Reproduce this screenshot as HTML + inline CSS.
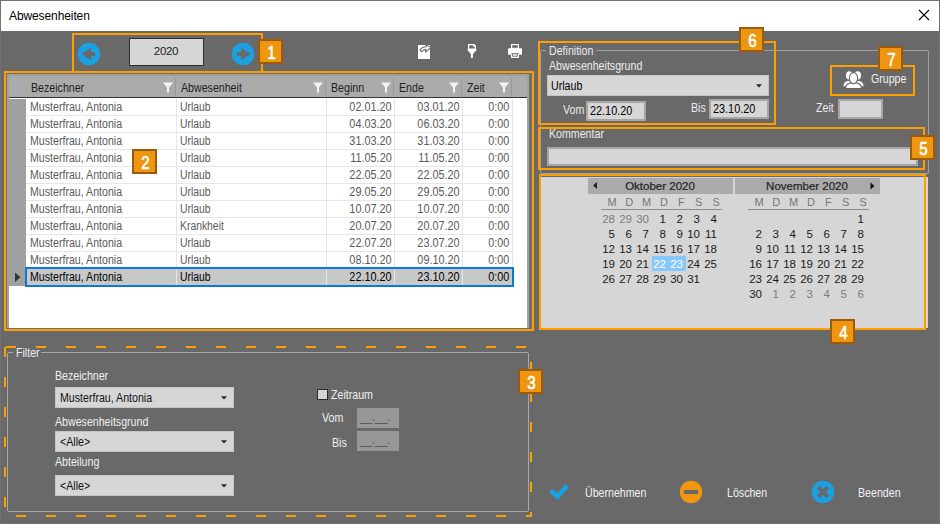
<!DOCTYPE html>
<html><head><meta charset="utf-8"><style>
html,body{margin:0;padding:0;width:940px;height:524px;overflow:hidden;background:#696969;}
body{position:relative;font-family:"Liberation Sans", sans-serif;}
div{box-sizing:content-box;}
</style></head><body>
<div style="position:absolute;left:0;top:0;width:938px;height:522px;border:1px solid #717171;background:#696969"></div>
<div style="position:absolute;left:1px;top:1px;width:938px;height:30px;background:#fff"></div>
<div style="position:absolute;left:9px;top:9.03px;font-size:12px;line-height:14px;color:#000;letter-spacing:-0.1px;white-space:nowrap;">Abwesenheiten</div>
<svg style="position:absolute;left:918px;top:9px" width="12" height="12" viewBox="0 0 12 12"><path d="M1 1L11 11M11 1L1 11" stroke="#000" stroke-width="1.1"/></svg>
<div style="position:absolute;left:72px;top:33px;width:191px;height:2px;background:#ff9e00"></div>
<div style="position:absolute;left:72px;top:71px;width:191px;height:2px;background:#ff9e00"></div>
<div style="position:absolute;left:72px;top:33px;width:2px;height:40px;background:#ff9e00"></div>
<div style="position:absolute;left:261px;top:33px;width:2px;height:40px;background:#ff9e00"></div>
<svg style="position:absolute;left:77px;top:42px" width="24" height="24" viewBox="0 0 24 24"><circle cx="12" cy="12" r="11.2" fill="#1ba1e2"/><path d="M4.3 12L14 5.7V10H18V14H14V18.3Z" fill="#696969"/></svg>
<svg style="position:absolute;left:231px;top:42px" width="24" height="24" viewBox="0 0 24 24"><circle cx="12" cy="12" r="11.2" fill="#1ba1e2"/><path d="M19.7 12L10 5.7V10H6V14H10V18.3Z" fill="#696969"/></svg>
<div style="position:absolute;left:129px;top:38px;width:73px;height:26px;border:1px solid #2e2e2e;background:#d6d6d6"></div>
<div style="position:absolute;left:-34px;width:400px;text-align:center;top:45.20px;font-size:11.5px;line-height:13px;color:#222;letter-spacing:-0.3px;white-space:nowrap;">2020</div>
<svg style="position:absolute;left:414px;top:42px" width="20" height="20" viewBox="0 0 20 20">
<rect x="4" y="3" width="12" height="14" fill="#fff"/>
<path d="M6 8C7.5 5.5 10 4.8 12.2 4.8L12.2 2.6L16.9 5.6L11.6 10.2L11.8 7.4C10 7.4 8.6 8.2 7.8 9.8Z" fill="#fff" stroke="#696969" stroke-width="1.1" stroke-linejoin="round"/>
</svg>
<svg style="position:absolute;left:462px;top:42px" width="20" height="20" viewBox="0 0 20 20">
<path d="M6 2H12.2L14 3.8V8H6Z" fill="#fff"/>
<path d="M7.2 3.2H11.2V4.8H12.8V6.6H7.2Z" fill="#696969"/>
<path d="M4.9 7.3H15.1L10.9 12.2V16H8.9V12.2Z" fill="#fff"/>
</svg>
<svg style="position:absolute;left:504px;top:42px" width="22" height="20" viewBox="0 0 22 20">
<rect x="7" y="2" width="8" height="5" fill="#fff"/>
<rect x="8.2" y="3.2" width="5.6" height="2.6" fill="#696969"/>
<rect x="4" y="6.3" width="14" height="6.5" rx="0.7" fill="#fff"/>
<rect x="7" y="11" width="8" height="5" fill="#fff"/>
<rect x="7.2" y="11" width="7.6" height="0.7" fill="#696969"/>
<rect x="8.2" y="11.6" width="5.6" height="3" fill="#696969"/>
<rect x="9.1" y="12.2" width="3.8" height="1.5" fill="#fff"/>
</svg>
<div style="position:absolute;left:4px;top:71px;width:530px;height:2px;background:#ff9e00"></div>
<div style="position:absolute;left:4px;top:329px;width:530px;height:2px;background:#ff9e00"></div>
<div style="position:absolute;left:4px;top:71px;width:2px;height:260px;background:#ff9e00"></div>
<div style="position:absolute;left:532px;top:71px;width:2px;height:260px;background:#ff9e00"></div>
<div style="position:absolute;left:6px;top:73px;width:526px;height:256px;background:#6e6e6e"></div>
<div style="position:absolute;left:7px;top:74px;width:522px;height:254px;background:#a0a0a0"></div>
<div style="position:absolute;left:9px;top:76px;width:518px;height:252px;background:#fff"></div>
<div style="position:absolute;left:9px;top:76px;width:518px;height:21px;background:#ababab"></div>
<div style="position:absolute;left:9px;top:97px;width:518px;height:1px;background:#333"></div>
<div style="position:absolute;left:175px;top:78px;width:1px;height:18px;background:#999"></div>
<div style="position:absolute;left:325px;top:78px;width:1px;height:18px;background:#999"></div>
<div style="position:absolute;left:393px;top:78px;width:1px;height:18px;background:#999"></div>
<div style="position:absolute;left:461px;top:78px;width:1px;height:18px;background:#999"></div>
<div style="position:absolute;left:511px;top:78px;width:1px;height:18px;background:#999"></div>
<div style="position:absolute;left:31px;top:80.87px;font-size:12.5px;line-height:14px;color:#1e1e1e;letter-spacing:0px;white-space:nowrap;transform:scaleX(0.85);transform-origin:left;">Bezeichner</div>
<div style="position:absolute;left:181px;top:80.87px;font-size:12.5px;line-height:14px;color:#1e1e1e;letter-spacing:0px;white-space:nowrap;transform:scaleX(0.85);transform-origin:left;">Abwesenheit</div>
<div style="position:absolute;left:331px;top:80.87px;font-size:12.5px;line-height:14px;color:#1e1e1e;letter-spacing:0px;white-space:nowrap;transform:scaleX(0.85);transform-origin:left;">Beginn</div>
<div style="position:absolute;left:399px;top:80.87px;font-size:12.5px;line-height:14px;color:#1e1e1e;letter-spacing:0px;white-space:nowrap;transform:scaleX(0.85);transform-origin:left;">Ende</div>
<div style="position:absolute;left:467px;top:80.87px;font-size:12.5px;line-height:14px;color:#1e1e1e;letter-spacing:0px;white-space:nowrap;transform:scaleX(0.85);transform-origin:left;">Zeit</div>
<svg style="position:absolute;left:162px;top:82px" width="12" height="11" viewBox="0 0 12 11"><path d="M1 0.5H11L7 5.5V10.5H5V5.5Z" fill="#f2f2f2"/></svg>
<svg style="position:absolute;left:312px;top:82px" width="12" height="11" viewBox="0 0 12 11"><path d="M1 0.5H11L7 5.5V10.5H5V5.5Z" fill="#f2f2f2"/></svg>
<svg style="position:absolute;left:380px;top:82px" width="12" height="11" viewBox="0 0 12 11"><path d="M1 0.5H11L7 5.5V10.5H5V5.5Z" fill="#f2f2f2"/></svg>
<svg style="position:absolute;left:448px;top:82px" width="12" height="11" viewBox="0 0 12 11"><path d="M1 0.5H11L7 5.5V10.5H5V5.5Z" fill="#f2f2f2"/></svg>
<svg style="position:absolute;left:498px;top:82px" width="12" height="11" viewBox="0 0 12 11"><path d="M1 0.5H11L7 5.5V10.5H5V5.5Z" fill="#f2f2f2"/></svg>
<div style="position:absolute;left:9px;top:98px;width:17px;height:229px;background:#fff"></div>
<div style="position:absolute;left:9px;top:99px;width:17px;height:187px;background:#a0a0a0"></div>
<div style="position:absolute;left:26px;top:115px;width:487px;height:1px;background:#e6e6e6"></div>
<div style="position:absolute;left:176px;top:99px;width:1px;height:16px;background:#e6e6e6"></div>
<div style="position:absolute;left:326px;top:99px;width:1px;height:16px;background:#e6e6e6"></div>
<div style="position:absolute;left:394px;top:99px;width:1px;height:16px;background:#e6e6e6"></div>
<div style="position:absolute;left:462px;top:99px;width:1px;height:16px;background:#e6e6e6"></div>
<div style="position:absolute;left:512px;top:99px;width:1px;height:16px;background:#e6e6e6"></div>
<div style="position:absolute;left:30px;top:99.87px;font-size:12.5px;line-height:14px;color:#5a5a5a;letter-spacing:0px;white-space:nowrap;transform:scaleX(0.85);transform-origin:left;">Musterfrau, Antonia</div>
<div style="position:absolute;left:180.3px;top:99.87px;font-size:12.5px;line-height:14px;color:#5a5a5a;letter-spacing:0px;white-space:nowrap;transform:scaleX(0.83);transform-origin:left;">Urlaub</div>
<div style="position:absolute;right:548.3px;top:99.87px;font-size:12.5px;line-height:14px;color:#5a5a5a;letter-spacing:0px;white-space:nowrap;transform:scaleX(0.87);transform-origin:right;">02.01.20</div>
<div style="position:absolute;right:480.3px;top:99.87px;font-size:12.5px;line-height:14px;color:#5a5a5a;letter-spacing:0px;white-space:nowrap;transform:scaleX(0.87);transform-origin:right;">03.01.20</div>
<div style="position:absolute;right:431px;top:99.87px;font-size:12.5px;line-height:14px;color:#5a5a5a;letter-spacing:0px;white-space:nowrap;transform:scaleX(0.87);transform-origin:right;">0:00</div>
<div style="position:absolute;left:26px;top:132px;width:487px;height:1px;background:#e6e6e6"></div>
<div style="position:absolute;left:176px;top:116px;width:1px;height:16px;background:#e6e6e6"></div>
<div style="position:absolute;left:326px;top:116px;width:1px;height:16px;background:#e6e6e6"></div>
<div style="position:absolute;left:394px;top:116px;width:1px;height:16px;background:#e6e6e6"></div>
<div style="position:absolute;left:462px;top:116px;width:1px;height:16px;background:#e6e6e6"></div>
<div style="position:absolute;left:512px;top:116px;width:1px;height:16px;background:#e6e6e6"></div>
<div style="position:absolute;left:30px;top:116.87px;font-size:12.5px;line-height:14px;color:#5a5a5a;letter-spacing:0px;white-space:nowrap;transform:scaleX(0.85);transform-origin:left;">Musterfrau, Antonia</div>
<div style="position:absolute;left:180.3px;top:116.87px;font-size:12.5px;line-height:14px;color:#5a5a5a;letter-spacing:0px;white-space:nowrap;transform:scaleX(0.83);transform-origin:left;">Urlaub</div>
<div style="position:absolute;right:548.3px;top:116.87px;font-size:12.5px;line-height:14px;color:#5a5a5a;letter-spacing:0px;white-space:nowrap;transform:scaleX(0.87);transform-origin:right;">04.03.20</div>
<div style="position:absolute;right:480.3px;top:116.87px;font-size:12.5px;line-height:14px;color:#5a5a5a;letter-spacing:0px;white-space:nowrap;transform:scaleX(0.87);transform-origin:right;">06.03.20</div>
<div style="position:absolute;right:431px;top:116.87px;font-size:12.5px;line-height:14px;color:#5a5a5a;letter-spacing:0px;white-space:nowrap;transform:scaleX(0.87);transform-origin:right;">0:00</div>
<div style="position:absolute;left:26px;top:149px;width:487px;height:1px;background:#e6e6e6"></div>
<div style="position:absolute;left:176px;top:133px;width:1px;height:16px;background:#e6e6e6"></div>
<div style="position:absolute;left:326px;top:133px;width:1px;height:16px;background:#e6e6e6"></div>
<div style="position:absolute;left:394px;top:133px;width:1px;height:16px;background:#e6e6e6"></div>
<div style="position:absolute;left:462px;top:133px;width:1px;height:16px;background:#e6e6e6"></div>
<div style="position:absolute;left:512px;top:133px;width:1px;height:16px;background:#e6e6e6"></div>
<div style="position:absolute;left:30px;top:133.87px;font-size:12.5px;line-height:14px;color:#5a5a5a;letter-spacing:0px;white-space:nowrap;transform:scaleX(0.85);transform-origin:left;">Musterfrau, Antonia</div>
<div style="position:absolute;left:180.3px;top:133.87px;font-size:12.5px;line-height:14px;color:#5a5a5a;letter-spacing:0px;white-space:nowrap;transform:scaleX(0.83);transform-origin:left;">Urlaub</div>
<div style="position:absolute;right:548.3px;top:133.87px;font-size:12.5px;line-height:14px;color:#5a5a5a;letter-spacing:0px;white-space:nowrap;transform:scaleX(0.87);transform-origin:right;">31.03.20</div>
<div style="position:absolute;right:480.3px;top:133.87px;font-size:12.5px;line-height:14px;color:#5a5a5a;letter-spacing:0px;white-space:nowrap;transform:scaleX(0.87);transform-origin:right;">31.03.20</div>
<div style="position:absolute;right:431px;top:133.87px;font-size:12.5px;line-height:14px;color:#5a5a5a;letter-spacing:0px;white-space:nowrap;transform:scaleX(0.87);transform-origin:right;">0:00</div>
<div style="position:absolute;left:26px;top:166px;width:487px;height:1px;background:#e6e6e6"></div>
<div style="position:absolute;left:176px;top:150px;width:1px;height:16px;background:#e6e6e6"></div>
<div style="position:absolute;left:326px;top:150px;width:1px;height:16px;background:#e6e6e6"></div>
<div style="position:absolute;left:394px;top:150px;width:1px;height:16px;background:#e6e6e6"></div>
<div style="position:absolute;left:462px;top:150px;width:1px;height:16px;background:#e6e6e6"></div>
<div style="position:absolute;left:512px;top:150px;width:1px;height:16px;background:#e6e6e6"></div>
<div style="position:absolute;left:30px;top:150.87px;font-size:12.5px;line-height:14px;color:#5a5a5a;letter-spacing:0px;white-space:nowrap;transform:scaleX(0.85);transform-origin:left;">Musterfrau, Antonia</div>
<div style="position:absolute;left:180.3px;top:150.87px;font-size:12.5px;line-height:14px;color:#5a5a5a;letter-spacing:0px;white-space:nowrap;transform:scaleX(0.83);transform-origin:left;">Urlaub</div>
<div style="position:absolute;right:548.3px;top:150.87px;font-size:12.5px;line-height:14px;color:#5a5a5a;letter-spacing:0px;white-space:nowrap;transform:scaleX(0.87);transform-origin:right;">11.05.20</div>
<div style="position:absolute;right:480.3px;top:150.87px;font-size:12.5px;line-height:14px;color:#5a5a5a;letter-spacing:0px;white-space:nowrap;transform:scaleX(0.87);transform-origin:right;">11.05.20</div>
<div style="position:absolute;right:431px;top:150.87px;font-size:12.5px;line-height:14px;color:#5a5a5a;letter-spacing:0px;white-space:nowrap;transform:scaleX(0.87);transform-origin:right;">0:00</div>
<div style="position:absolute;left:26px;top:183px;width:487px;height:1px;background:#e6e6e6"></div>
<div style="position:absolute;left:176px;top:167px;width:1px;height:16px;background:#e6e6e6"></div>
<div style="position:absolute;left:326px;top:167px;width:1px;height:16px;background:#e6e6e6"></div>
<div style="position:absolute;left:394px;top:167px;width:1px;height:16px;background:#e6e6e6"></div>
<div style="position:absolute;left:462px;top:167px;width:1px;height:16px;background:#e6e6e6"></div>
<div style="position:absolute;left:512px;top:167px;width:1px;height:16px;background:#e6e6e6"></div>
<div style="position:absolute;left:30px;top:167.87px;font-size:12.5px;line-height:14px;color:#5a5a5a;letter-spacing:0px;white-space:nowrap;transform:scaleX(0.85);transform-origin:left;">Musterfrau, Antonia</div>
<div style="position:absolute;left:180.3px;top:167.87px;font-size:12.5px;line-height:14px;color:#5a5a5a;letter-spacing:0px;white-space:nowrap;transform:scaleX(0.83);transform-origin:left;">Urlaub</div>
<div style="position:absolute;right:548.3px;top:167.87px;font-size:12.5px;line-height:14px;color:#5a5a5a;letter-spacing:0px;white-space:nowrap;transform:scaleX(0.87);transform-origin:right;">22.05.20</div>
<div style="position:absolute;right:480.3px;top:167.87px;font-size:12.5px;line-height:14px;color:#5a5a5a;letter-spacing:0px;white-space:nowrap;transform:scaleX(0.87);transform-origin:right;">22.05.20</div>
<div style="position:absolute;right:431px;top:167.87px;font-size:12.5px;line-height:14px;color:#5a5a5a;letter-spacing:0px;white-space:nowrap;transform:scaleX(0.87);transform-origin:right;">0:00</div>
<div style="position:absolute;left:26px;top:200px;width:487px;height:1px;background:#e6e6e6"></div>
<div style="position:absolute;left:176px;top:184px;width:1px;height:16px;background:#e6e6e6"></div>
<div style="position:absolute;left:326px;top:184px;width:1px;height:16px;background:#e6e6e6"></div>
<div style="position:absolute;left:394px;top:184px;width:1px;height:16px;background:#e6e6e6"></div>
<div style="position:absolute;left:462px;top:184px;width:1px;height:16px;background:#e6e6e6"></div>
<div style="position:absolute;left:512px;top:184px;width:1px;height:16px;background:#e6e6e6"></div>
<div style="position:absolute;left:30px;top:184.87px;font-size:12.5px;line-height:14px;color:#5a5a5a;letter-spacing:0px;white-space:nowrap;transform:scaleX(0.85);transform-origin:left;">Musterfrau, Antonia</div>
<div style="position:absolute;left:180.3px;top:184.87px;font-size:12.5px;line-height:14px;color:#5a5a5a;letter-spacing:0px;white-space:nowrap;transform:scaleX(0.83);transform-origin:left;">Urlaub</div>
<div style="position:absolute;right:548.3px;top:184.87px;font-size:12.5px;line-height:14px;color:#5a5a5a;letter-spacing:0px;white-space:nowrap;transform:scaleX(0.87);transform-origin:right;">29.05.20</div>
<div style="position:absolute;right:480.3px;top:184.87px;font-size:12.5px;line-height:14px;color:#5a5a5a;letter-spacing:0px;white-space:nowrap;transform:scaleX(0.87);transform-origin:right;">29.05.20</div>
<div style="position:absolute;right:431px;top:184.87px;font-size:12.5px;line-height:14px;color:#5a5a5a;letter-spacing:0px;white-space:nowrap;transform:scaleX(0.87);transform-origin:right;">0:00</div>
<div style="position:absolute;left:26px;top:217px;width:487px;height:1px;background:#e6e6e6"></div>
<div style="position:absolute;left:176px;top:201px;width:1px;height:16px;background:#e6e6e6"></div>
<div style="position:absolute;left:326px;top:201px;width:1px;height:16px;background:#e6e6e6"></div>
<div style="position:absolute;left:394px;top:201px;width:1px;height:16px;background:#e6e6e6"></div>
<div style="position:absolute;left:462px;top:201px;width:1px;height:16px;background:#e6e6e6"></div>
<div style="position:absolute;left:512px;top:201px;width:1px;height:16px;background:#e6e6e6"></div>
<div style="position:absolute;left:30px;top:201.87px;font-size:12.5px;line-height:14px;color:#5a5a5a;letter-spacing:0px;white-space:nowrap;transform:scaleX(0.85);transform-origin:left;">Musterfrau, Antonia</div>
<div style="position:absolute;left:180.3px;top:201.87px;font-size:12.5px;line-height:14px;color:#5a5a5a;letter-spacing:0px;white-space:nowrap;transform:scaleX(0.83);transform-origin:left;">Urlaub</div>
<div style="position:absolute;right:548.3px;top:201.87px;font-size:12.5px;line-height:14px;color:#5a5a5a;letter-spacing:0px;white-space:nowrap;transform:scaleX(0.87);transform-origin:right;">10.07.20</div>
<div style="position:absolute;right:480.3px;top:201.87px;font-size:12.5px;line-height:14px;color:#5a5a5a;letter-spacing:0px;white-space:nowrap;transform:scaleX(0.87);transform-origin:right;">10.07.20</div>
<div style="position:absolute;right:431px;top:201.87px;font-size:12.5px;line-height:14px;color:#5a5a5a;letter-spacing:0px;white-space:nowrap;transform:scaleX(0.87);transform-origin:right;">0:00</div>
<div style="position:absolute;left:26px;top:234px;width:487px;height:1px;background:#e6e6e6"></div>
<div style="position:absolute;left:176px;top:218px;width:1px;height:16px;background:#e6e6e6"></div>
<div style="position:absolute;left:326px;top:218px;width:1px;height:16px;background:#e6e6e6"></div>
<div style="position:absolute;left:394px;top:218px;width:1px;height:16px;background:#e6e6e6"></div>
<div style="position:absolute;left:462px;top:218px;width:1px;height:16px;background:#e6e6e6"></div>
<div style="position:absolute;left:512px;top:218px;width:1px;height:16px;background:#e6e6e6"></div>
<div style="position:absolute;left:30px;top:218.87px;font-size:12.5px;line-height:14px;color:#5a5a5a;letter-spacing:0px;white-space:nowrap;transform:scaleX(0.85);transform-origin:left;">Musterfrau, Antonia</div>
<div style="position:absolute;left:180.3px;top:218.87px;font-size:12.5px;line-height:14px;color:#5a5a5a;letter-spacing:0px;white-space:nowrap;transform:scaleX(0.83);transform-origin:left;">Krankheit</div>
<div style="position:absolute;right:548.3px;top:218.87px;font-size:12.5px;line-height:14px;color:#5a5a5a;letter-spacing:0px;white-space:nowrap;transform:scaleX(0.87);transform-origin:right;">20.07.20</div>
<div style="position:absolute;right:480.3px;top:218.87px;font-size:12.5px;line-height:14px;color:#5a5a5a;letter-spacing:0px;white-space:nowrap;transform:scaleX(0.87);transform-origin:right;">20.07.20</div>
<div style="position:absolute;right:431px;top:218.87px;font-size:12.5px;line-height:14px;color:#5a5a5a;letter-spacing:0px;white-space:nowrap;transform:scaleX(0.87);transform-origin:right;">0:00</div>
<div style="position:absolute;left:26px;top:251px;width:487px;height:1px;background:#e6e6e6"></div>
<div style="position:absolute;left:176px;top:235px;width:1px;height:16px;background:#e6e6e6"></div>
<div style="position:absolute;left:326px;top:235px;width:1px;height:16px;background:#e6e6e6"></div>
<div style="position:absolute;left:394px;top:235px;width:1px;height:16px;background:#e6e6e6"></div>
<div style="position:absolute;left:462px;top:235px;width:1px;height:16px;background:#e6e6e6"></div>
<div style="position:absolute;left:512px;top:235px;width:1px;height:16px;background:#e6e6e6"></div>
<div style="position:absolute;left:30px;top:235.87px;font-size:12.5px;line-height:14px;color:#5a5a5a;letter-spacing:0px;white-space:nowrap;transform:scaleX(0.85);transform-origin:left;">Musterfrau, Antonia</div>
<div style="position:absolute;left:180.3px;top:235.87px;font-size:12.5px;line-height:14px;color:#5a5a5a;letter-spacing:0px;white-space:nowrap;transform:scaleX(0.83);transform-origin:left;">Urlaub</div>
<div style="position:absolute;right:548.3px;top:235.87px;font-size:12.5px;line-height:14px;color:#5a5a5a;letter-spacing:0px;white-space:nowrap;transform:scaleX(0.87);transform-origin:right;">22.07.20</div>
<div style="position:absolute;right:480.3px;top:235.87px;font-size:12.5px;line-height:14px;color:#5a5a5a;letter-spacing:0px;white-space:nowrap;transform:scaleX(0.87);transform-origin:right;">23.07.20</div>
<div style="position:absolute;right:431px;top:235.87px;font-size:12.5px;line-height:14px;color:#5a5a5a;letter-spacing:0px;white-space:nowrap;transform:scaleX(0.87);transform-origin:right;">0:00</div>
<div style="position:absolute;left:26px;top:268px;width:487px;height:1px;background:#e6e6e6"></div>
<div style="position:absolute;left:176px;top:252px;width:1px;height:16px;background:#e6e6e6"></div>
<div style="position:absolute;left:326px;top:252px;width:1px;height:16px;background:#e6e6e6"></div>
<div style="position:absolute;left:394px;top:252px;width:1px;height:16px;background:#e6e6e6"></div>
<div style="position:absolute;left:462px;top:252px;width:1px;height:16px;background:#e6e6e6"></div>
<div style="position:absolute;left:512px;top:252px;width:1px;height:16px;background:#e6e6e6"></div>
<div style="position:absolute;left:30px;top:252.87px;font-size:12.5px;line-height:14px;color:#5a5a5a;letter-spacing:0px;white-space:nowrap;transform:scaleX(0.85);transform-origin:left;">Musterfrau, Antonia</div>
<div style="position:absolute;left:180.3px;top:252.87px;font-size:12.5px;line-height:14px;color:#5a5a5a;letter-spacing:0px;white-space:nowrap;transform:scaleX(0.83);transform-origin:left;">Urlaub</div>
<div style="position:absolute;right:548.3px;top:252.87px;font-size:12.5px;line-height:14px;color:#5a5a5a;letter-spacing:0px;white-space:nowrap;transform:scaleX(0.87);transform-origin:right;">08.10.20</div>
<div style="position:absolute;right:480.3px;top:252.87px;font-size:12.5px;line-height:14px;color:#5a5a5a;letter-spacing:0px;white-space:nowrap;transform:scaleX(0.87);transform-origin:right;">09.10.20</div>
<div style="position:absolute;right:431px;top:252.87px;font-size:12.5px;line-height:14px;color:#5a5a5a;letter-spacing:0px;white-space:nowrap;transform:scaleX(0.87);transform-origin:right;">0:00</div>
<div style="position:absolute;left:26px;top:267px;width:488px;height:19px;background:#c8c8c8"></div>
<div style="position:absolute;left:26px;top:285px;width:487px;height:1px;background:#e6e6e6"></div>
<div style="position:absolute;left:176px;top:269px;width:1px;height:16px;background:#e6e6e6"></div>
<div style="position:absolute;left:326px;top:269px;width:1px;height:16px;background:#e6e6e6"></div>
<div style="position:absolute;left:394px;top:269px;width:1px;height:16px;background:#e6e6e6"></div>
<div style="position:absolute;left:462px;top:269px;width:1px;height:16px;background:#e6e6e6"></div>
<div style="position:absolute;left:512px;top:269px;width:1px;height:16px;background:#e6e6e6"></div>
<div style="position:absolute;left:30px;top:269.87px;font-size:12.5px;line-height:14px;color:#000;letter-spacing:0px;white-space:nowrap;transform:scaleX(0.85);transform-origin:left;">Musterfrau, Antonia</div>
<div style="position:absolute;left:180.3px;top:269.87px;font-size:12.5px;line-height:14px;color:#000;letter-spacing:0px;white-space:nowrap;transform:scaleX(0.83);transform-origin:left;">Urlaub</div>
<div style="position:absolute;right:548.3px;top:269.87px;font-size:12.5px;line-height:14px;color:#000;letter-spacing:0px;white-space:nowrap;transform:scaleX(0.87);transform-origin:right;">22.10.20</div>
<div style="position:absolute;right:480.3px;top:269.87px;font-size:12.5px;line-height:14px;color:#000;letter-spacing:0px;white-space:nowrap;transform:scaleX(0.87);transform-origin:right;">23.10.20</div>
<div style="position:absolute;right:431px;top:269.87px;font-size:12.5px;line-height:14px;color:#000;letter-spacing:0px;white-space:nowrap;transform:scaleX(0.87);transform-origin:right;">0:00</div>
<div style="position:absolute;left:25px;top:267px;width:485px;height:16px;border:2px solid #0a7ad6"></div>
<svg style="position:absolute;left:14px;top:272px" width="8" height="11" viewBox="0 0 8 11"><path d="M1 0.5L6.5 5.25L1 10Z" fill="#333"/></svg>
<div style="position:absolute;left:132px;top:149px;width:21px;height:21px;border:2px solid #9c5b0c;background:#ee960f;"></div>
<div style="position:absolute;left:132.5px;top:152.5px;width:25px;height:21px;color:#fff;font-size:18px;line-height:21px;text-align:center;-webkit-text-stroke:0.6px #fff;transform:scaleX(0.84);">2</div>
<div style="position:absolute;left:258px;top:39px;width:21px;height:21px;border:2px solid #9c5b0c;background:#ee960f;"></div>
<div style="position:absolute;left:258.5px;top:42.5px;width:25px;height:21px;color:#fff;font-size:18px;line-height:21px;text-align:center;-webkit-text-stroke:0.6px #fff;transform:scaleX(0.84);">1</div>
<div style="position:absolute;left:6px;top:346px;width:10px;height:2px;background:#ff9e00"></div>
<div style="position:absolute;left:36px;top:346px;width:10px;height:2px;background:#ff9e00"></div>
<div style="position:absolute;left:66px;top:346px;width:10px;height:2px;background:#ff9e00"></div>
<div style="position:absolute;left:96px;top:346px;width:10px;height:2px;background:#ff9e00"></div>
<div style="position:absolute;left:126px;top:346px;width:10px;height:2px;background:#ff9e00"></div>
<div style="position:absolute;left:156px;top:346px;width:10px;height:2px;background:#ff9e00"></div>
<div style="position:absolute;left:186px;top:346px;width:10px;height:2px;background:#ff9e00"></div>
<div style="position:absolute;left:216px;top:346px;width:10px;height:2px;background:#ff9e00"></div>
<div style="position:absolute;left:246px;top:346px;width:10px;height:2px;background:#ff9e00"></div>
<div style="position:absolute;left:276px;top:346px;width:10px;height:2px;background:#ff9e00"></div>
<div style="position:absolute;left:306px;top:346px;width:10px;height:2px;background:#ff9e00"></div>
<div style="position:absolute;left:336px;top:346px;width:10px;height:2px;background:#ff9e00"></div>
<div style="position:absolute;left:366px;top:346px;width:10px;height:2px;background:#ff9e00"></div>
<div style="position:absolute;left:396px;top:346px;width:10px;height:2px;background:#ff9e00"></div>
<div style="position:absolute;left:426px;top:346px;width:10px;height:2px;background:#ff9e00"></div>
<div style="position:absolute;left:456px;top:346px;width:10px;height:2px;background:#ff9e00"></div>
<div style="position:absolute;left:486px;top:346px;width:10px;height:2px;background:#ff9e00"></div>
<div style="position:absolute;left:516px;top:346px;width:10px;height:2px;background:#ff9e00"></div>
<div style="position:absolute;left:16px;top:515px;width:10px;height:2px;background:#ff9e00"></div>
<div style="position:absolute;left:46px;top:515px;width:10px;height:2px;background:#ff9e00"></div>
<div style="position:absolute;left:76px;top:515px;width:10px;height:2px;background:#ff9e00"></div>
<div style="position:absolute;left:106px;top:515px;width:10px;height:2px;background:#ff9e00"></div>
<div style="position:absolute;left:136px;top:515px;width:10px;height:2px;background:#ff9e00"></div>
<div style="position:absolute;left:166px;top:515px;width:10px;height:2px;background:#ff9e00"></div>
<div style="position:absolute;left:196px;top:515px;width:10px;height:2px;background:#ff9e00"></div>
<div style="position:absolute;left:226px;top:515px;width:10px;height:2px;background:#ff9e00"></div>
<div style="position:absolute;left:256px;top:515px;width:10px;height:2px;background:#ff9e00"></div>
<div style="position:absolute;left:286px;top:515px;width:10px;height:2px;background:#ff9e00"></div>
<div style="position:absolute;left:316px;top:515px;width:10px;height:2px;background:#ff9e00"></div>
<div style="position:absolute;left:346px;top:515px;width:10px;height:2px;background:#ff9e00"></div>
<div style="position:absolute;left:376px;top:515px;width:10px;height:2px;background:#ff9e00"></div>
<div style="position:absolute;left:406px;top:515px;width:10px;height:2px;background:#ff9e00"></div>
<div style="position:absolute;left:436px;top:515px;width:10px;height:2px;background:#ff9e00"></div>
<div style="position:absolute;left:466px;top:515px;width:10px;height:2px;background:#ff9e00"></div>
<div style="position:absolute;left:496px;top:515px;width:10px;height:2px;background:#ff9e00"></div>
<div style="position:absolute;left:526px;top:515px;width:6px;height:2px;background:#ff9e00"></div>
<div style="position:absolute;left:4px;top:347px;width:2px;height:10px;background:#ff9e00"></div>
<div style="position:absolute;left:4px;top:377px;width:2px;height:10px;background:#ff9e00"></div>
<div style="position:absolute;left:4px;top:407px;width:2px;height:10px;background:#ff9e00"></div>
<div style="position:absolute;left:4px;top:437px;width:2px;height:10px;background:#ff9e00"></div>
<div style="position:absolute;left:4px;top:467px;width:2px;height:10px;background:#ff9e00"></div>
<div style="position:absolute;left:4px;top:497px;width:2px;height:10px;background:#ff9e00"></div>
<div style="position:absolute;left:530px;top:362px;width:2px;height:10px;background:#ff9e00"></div>
<div style="position:absolute;left:530px;top:392px;width:2px;height:10px;background:#ff9e00"></div>
<div style="position:absolute;left:530px;top:422px;width:2px;height:10px;background:#ff9e00"></div>
<div style="position:absolute;left:530px;top:452px;width:2px;height:10px;background:#ff9e00"></div>
<div style="position:absolute;left:530px;top:482px;width:2px;height:10px;background:#ff9e00"></div>
<div style="position:absolute;left:530px;top:512px;width:2px;height:5px;background:#ff9e00"></div>
<div style="position:absolute;left:7px;top:352px;width:520px;height:158px;border:1px solid #a8a8a8;border-radius:2px"></div>
<div style="position:absolute;left:13px;top:348px;width:28px;height:10px;background:#696969"></div>
<div style="position:absolute;left:16px;top:345.87px;font-size:12.5px;line-height:14px;color:#f0f0f0;letter-spacing:0px;white-space:nowrap;transform:scaleX(0.85);transform-origin:left;">Filter</div>
<div style="position:absolute;left:55px;top:368.87px;font-size:12.5px;line-height:14px;color:#f0f0f0;letter-spacing:0px;white-space:nowrap;transform:scaleX(0.85);transform-origin:left;">Bezeichner</div>
<div style="position:absolute;left:55px;top:387px;width:177px;height:19px;border:1px solid #c4c4c4;background:#d6d6d6"></div>
<svg style="position:absolute;left:221px;top:396px" width="6" height="4" viewBox="0 0 6 4"><path d="M0 0.2H6L3 3.4Z" fill="#222"/></svg>
<div style="position:absolute;left:60px;top:390.87px;font-size:12.5px;line-height:14px;color:#111;letter-spacing:0px;white-space:nowrap;transform:scaleX(0.85);transform-origin:left;">Musterfrau, Antonia</div>
<div style="position:absolute;left:55px;top:414.87px;font-size:12.5px;line-height:14px;color:#f0f0f0;letter-spacing:0px;white-space:nowrap;transform:scaleX(0.85);transform-origin:left;">Abwesenheitsgrund</div>
<div style="position:absolute;left:55px;top:431px;width:177px;height:19px;border:1px solid #c4c4c4;background:#d6d6d6"></div>
<svg style="position:absolute;left:221px;top:440px" width="6" height="4" viewBox="0 0 6 4"><path d="M0 0.2H6L3 3.4Z" fill="#222"/></svg>
<div style="position:absolute;left:60px;top:434.87px;font-size:12.5px;line-height:14px;color:#111;letter-spacing:0px;white-space:nowrap;transform:scaleX(0.85);transform-origin:left;">&lt;Alle&gt;</div>
<div style="position:absolute;left:55px;top:454.87px;font-size:12.5px;line-height:14px;color:#f0f0f0;letter-spacing:0px;white-space:nowrap;transform:scaleX(0.85);transform-origin:left;">Abteilung</div>
<div style="position:absolute;left:55px;top:475px;width:177px;height:19px;border:1px solid #c4c4c4;background:#d6d6d6"></div>
<svg style="position:absolute;left:221px;top:484px" width="6" height="4" viewBox="0 0 6 4"><path d="M0 0.2H6L3 3.4Z" fill="#222"/></svg>
<div style="position:absolute;left:60px;top:478.87px;font-size:12.5px;line-height:14px;color:#111;letter-spacing:0px;white-space:nowrap;transform:scaleX(0.85);transform-origin:left;">&lt;Alle&gt;</div>
<div style="position:absolute;left:317px;top:389px;width:9px;height:9px;border:1px solid #2a2a2a;background:#d6d6d6"></div>
<div style="position:absolute;left:331px;top:387.87px;font-size:12.5px;line-height:14px;color:#f0f0f0;letter-spacing:0px;white-space:nowrap;transform:scaleX(0.85);transform-origin:left;">Zeitraum</div>
<div style="position:absolute;left:322px;top:410.87px;font-size:12.5px;line-height:14px;color:#f0f0f0;letter-spacing:0px;white-space:nowrap;transform:scaleX(0.85);transform-origin:left;">Vom</div>
<div style="position:absolute;left:357px;top:408px;width:42px;height:20px;background:#979797"></div>
<div style="position:absolute;left:360px;top:409.87px;font-size:12.5px;line-height:14px;color:#555;letter-spacing:0px;white-space:nowrap;transform:scaleX(0.87);transform-origin:left;">__.__.</div>
<div style="position:absolute;left:332px;top:435.87px;font-size:12.5px;line-height:14px;color:#f0f0f0;letter-spacing:0px;white-space:nowrap;transform:scaleX(0.85);transform-origin:left;">Bis</div>
<div style="position:absolute;left:357px;top:431px;width:42px;height:20px;background:#979797"></div>
<div style="position:absolute;left:360px;top:433.37px;font-size:12.5px;line-height:14px;color:#555;letter-spacing:0px;white-space:nowrap;transform:scaleX(0.87);transform-origin:left;">__.__.</div>
<div style="position:absolute;left:518px;top:369px;width:21px;height:21px;border:2px solid #9c5b0c;background:#ee960f;"></div>
<div style="position:absolute;left:518.5px;top:372.5px;width:25px;height:21px;color:#fff;font-size:18px;line-height:21px;text-align:center;-webkit-text-stroke:0.6px #fff;transform:scaleX(0.84);">3</div>
<div style="position:absolute;left:540px;top:50px;width:387px;height:122px;border:1px solid #a0a0a0;border-radius:2px"></div>
<div style="position:absolute;left:538px;top:41px;width:238px;height:2px;background:#ff9e00"></div>
<div style="position:absolute;left:538px;top:123px;width:238px;height:2px;background:#ff9e00"></div>
<div style="position:absolute;left:538px;top:41px;width:2px;height:84px;background:#ff9e00"></div>
<div style="position:absolute;left:774px;top:41px;width:2px;height:84px;background:#ff9e00"></div>
<div style="position:absolute;left:546px;top:46px;width:50px;height:10px;background:#696969"></div>
<div style="position:absolute;left:549px;top:43.87px;font-size:12.5px;line-height:14px;color:#ececec;letter-spacing:0px;white-space:nowrap;transform:scaleX(0.85);transform-origin:left;">Definition</div>
<div style="position:absolute;left:549px;top:58.87px;font-size:12.5px;line-height:14px;color:#ececec;letter-spacing:0px;white-space:nowrap;transform:scaleX(0.85);transform-origin:left;">Abwesenheitsgrund</div>
<div style="position:absolute;left:547px;top:75px;width:220px;height:19px;border:1px solid #c4c4c4;background:#d6d6d6"></div>
<svg style="position:absolute;left:756px;top:84px" width="6" height="4" viewBox="0 0 6 4"><path d="M0 0.2H6L3 3.4Z" fill="#222"/></svg>
<div style="position:absolute;left:551px;top:78.87px;font-size:12.5px;line-height:14px;color:#000;letter-spacing:0px;white-space:nowrap;transform:scaleX(0.85);transform-origin:left;">Urlaub</div>
<div style="position:absolute;left:563.3px;top:102.87px;font-size:12.5px;line-height:14px;color:#ececec;letter-spacing:0px;white-space:nowrap;transform:scaleX(0.85);transform-origin:left;">Vom</div>
<div style="position:absolute;left:586px;top:101px;width:56px;height:16px;border:2px solid #a6a6a6;background:#d6d6d6"></div>
<div style="position:absolute;left:589.5px;top:103.87px;font-size:12.5px;line-height:14px;color:#000;letter-spacing:0px;white-space:nowrap;transform:scaleX(0.87);transform-origin:left;">22.10.20</div>
<div style="position:absolute;left:691px;top:100.87px;font-size:12.5px;line-height:14px;color:#ececec;letter-spacing:0px;white-space:nowrap;transform:scaleX(0.85);transform-origin:left;">Bis</div>
<div style="position:absolute;left:709px;top:99px;width:56px;height:16px;border:2px solid #a6a6a6;background:#d6d6d6"></div>
<div style="position:absolute;left:712.5px;top:101.87px;font-size:12.5px;line-height:14px;color:#000;letter-spacing:0px;white-space:nowrap;transform:scaleX(0.87);transform-origin:left;">23.10.20</div>
<div style="position:absolute;left:739px;top:27px;width:21px;height:21px;border:2px solid #9c5b0c;background:#ee960f;"></div>
<div style="position:absolute;left:739.5px;top:30.5px;width:25px;height:21px;color:#fff;font-size:18px;line-height:21px;text-align:center;-webkit-text-stroke:0.6px #fff;transform:scaleX(0.84);">6</div>
<div style="position:absolute;left:830px;top:65px;width:85px;height:2px;background:#ff9e00"></div>
<div style="position:absolute;left:830px;top:94px;width:85px;height:2px;background:#ff9e00"></div>
<div style="position:absolute;left:830px;top:65px;width:2px;height:31px;background:#ff9e00"></div>
<div style="position:absolute;left:913px;top:65px;width:2px;height:31px;background:#ff9e00"></div>
<svg style="position:absolute;left:842px;top:70px" width="23" height="19" viewBox="0 0 23 19">
<g fill="#fff" stroke="#696969" stroke-width="1.1">
<ellipse cx="7.3" cy="5.4" rx="3.9" ry="4.7"/>
<ellipse cx="15.7" cy="5.4" rx="3.9" ry="4.7"/>
<path d="M0.8 16.8C0.8 12.5 3.5 10.5 7 10.5C10 10.5 12 12 12 16.8Z"/>
<path d="M22.2 16.8C22.2 12.5 19.5 10.5 16 10.5C13 10.5 11 12 11 16.8Z"/>
<path d="M3.5 18.5C3.5 14 6.5 12.6 11.5 12.6C16.5 12.6 19.5 14 19.5 18.5Z"/>
<ellipse cx="11.5" cy="8.2" rx="4.1" ry="5.6"/>
</g></svg>
<div style="position:absolute;left:871px;top:71.87px;font-size:12.5px;line-height:14px;color:#f0f0f0;letter-spacing:0px;white-space:nowrap;transform:scaleX(0.85);transform-origin:left;">Gruppe</div>
<div style="position:absolute;left:878px;top:46px;width:21px;height:21px;border:2px solid #9c5b0c;background:#ee960f;"></div>
<div style="position:absolute;left:878.5px;top:49.5px;width:25px;height:21px;color:#fff;font-size:18px;line-height:21px;text-align:center;-webkit-text-stroke:0.6px #fff;transform:scaleX(0.84);">7</div>
<div style="position:absolute;left:816px;top:100.87px;font-size:12.5px;line-height:14px;color:#ececec;letter-spacing:0px;white-space:nowrap;transform:scaleX(0.85);transform-origin:left;">Zeit</div>
<div style="position:absolute;left:838px;top:99px;width:41px;height:16px;border:2px solid #a6a6a6;background:#d6d6d6"></div>
<div style="position:absolute;left:538px;top:127px;width:387px;height:2px;background:#ff9e00"></div>
<div style="position:absolute;left:538px;top:168px;width:387px;height:2px;background:#ff9e00"></div>
<div style="position:absolute;left:538px;top:127px;width:2px;height:43px;background:#ff9e00"></div>
<div style="position:absolute;left:923px;top:127px;width:2px;height:43px;background:#ff9e00"></div>
<div style="position:absolute;left:549px;top:126.87px;font-size:12.5px;line-height:14px;color:#ececec;letter-spacing:0px;white-space:nowrap;transform:scaleX(0.85);transform-origin:left;">Kommentar</div>
<div style="position:absolute;left:547px;top:147px;width:367px;height:15px;border:2px solid #a6a6a6;background:#d6d6d6"></div>
<div style="position:absolute;left:910px;top:135px;width:21px;height:21px;border:2px solid #9c5b0c;background:#ee960f;"></div>
<div style="position:absolute;left:910.5px;top:138.5px;width:25px;height:21px;color:#fff;font-size:18px;line-height:21px;text-align:center;-webkit-text-stroke:0.6px #fff;transform:scaleX(0.84);">5</div>
<div style="position:absolute;left:539px;top:174px;width:387px;height:2px;background:#ff9e00"></div>
<div style="position:absolute;left:539px;top:328px;width:387px;height:2px;background:#ff9e00"></div>
<div style="position:absolute;left:539px;top:174px;width:2px;height:156px;background:#ff9e00"></div>
<div style="position:absolute;left:924px;top:174px;width:2px;height:156px;background:#ff9e00"></div>
<div style="position:absolute;left:541px;top:177px;width:387px;height:151px;background:#d6d6d6"></div>
<div style="position:absolute;left:539px;top:174px;width:387px;height:2px;background:#ff9e00"></div>
<div style="position:absolute;left:539px;top:328px;width:387px;height:2px;background:#ff9e00"></div>
<div style="position:absolute;left:539px;top:174px;width:2px;height:156px;background:#ff9e00"></div>
<div style="position:absolute;left:924px;top:174px;width:2px;height:156px;background:#ff9e00"></div>
<div style="position:absolute;left:652px;top:256px;width:34px;height:15px;background:#85c9fc"></div>
<div style="position:absolute;left:588px;top:178px;width:145px;height:16px;background:#aaaaaa"></div>
<div style="position:absolute;left:460px;width:400px;text-align:center;top:179.70px;font-size:11.5px;line-height:13px;color:#222;letter-spacing:0px;white-space:nowrap;-webkit-text-stroke:0.2px #222">Oktober 2020</div>
<svg style="position:absolute;left:592px;top:181px" width="6" height="9" viewBox="0 0 6 9"><path d="M5 1V8L1 4.5Z" fill="#222"/></svg>
<div style="position:absolute;left:412.0px;width:400px;text-align:center;top:195.86px;font-size:11px;line-height:13px;color:#777;letter-spacing:0px;white-space:nowrap;">M</div>
<div style="position:absolute;left:429.35px;width:400px;text-align:center;top:195.86px;font-size:11px;line-height:13px;color:#777;letter-spacing:0px;white-space:nowrap;">D</div>
<div style="position:absolute;left:446.70000000000005px;width:400px;text-align:center;top:195.86px;font-size:11px;line-height:13px;color:#777;letter-spacing:0px;white-space:nowrap;">M</div>
<div style="position:absolute;left:464.04999999999995px;width:400px;text-align:center;top:195.86px;font-size:11px;line-height:13px;color:#777;letter-spacing:0px;white-space:nowrap;">D</div>
<div style="position:absolute;left:481.4px;width:400px;text-align:center;top:195.86px;font-size:11px;line-height:13px;color:#777;letter-spacing:0px;white-space:nowrap;">F</div>
<div style="position:absolute;left:498.75px;width:400px;text-align:center;top:195.86px;font-size:11px;line-height:13px;color:#777;letter-spacing:0px;white-space:nowrap;">S</div>
<div style="position:absolute;left:516.1px;width:400px;text-align:center;top:195.86px;font-size:11px;line-height:13px;color:#777;letter-spacing:0px;white-space:nowrap;">S</div>
<div style="position:absolute;left:601px;top:209px;width:121px;height:1px;background:#8c8c8c"></div>
<div style="position:absolute;right:325px;top:212.70px;font-size:11.5px;line-height:13px;color:#7c7c7c;letter-spacing:0px;white-space:nowrap;">28</div>
<div style="position:absolute;right:308px;top:212.70px;font-size:11.5px;line-height:13px;color:#7c7c7c;letter-spacing:0px;white-space:nowrap;">29</div>
<div style="position:absolute;right:291px;top:212.70px;font-size:11.5px;line-height:13px;color:#7c7c7c;letter-spacing:0px;white-space:nowrap;">30</div>
<div style="position:absolute;right:274px;top:212.70px;font-size:11.5px;line-height:13px;color:#1a1a1a;letter-spacing:0px;white-space:nowrap;">1</div>
<div style="position:absolute;right:257px;top:212.70px;font-size:11.5px;line-height:13px;color:#1a1a1a;letter-spacing:0px;white-space:nowrap;">2</div>
<div style="position:absolute;right:240px;top:212.70px;font-size:11.5px;line-height:13px;color:#1a1a1a;letter-spacing:0px;white-space:nowrap;">3</div>
<div style="position:absolute;right:223px;top:212.70px;font-size:11.5px;line-height:13px;color:#1a1a1a;letter-spacing:0px;white-space:nowrap;">4</div>
<div style="position:absolute;right:325px;top:227.70px;font-size:11.5px;line-height:13px;color:#1a1a1a;letter-spacing:0px;white-space:nowrap;">5</div>
<div style="position:absolute;right:308px;top:227.70px;font-size:11.5px;line-height:13px;color:#1a1a1a;letter-spacing:0px;white-space:nowrap;">6</div>
<div style="position:absolute;right:291px;top:227.70px;font-size:11.5px;line-height:13px;color:#1a1a1a;letter-spacing:0px;white-space:nowrap;">7</div>
<div style="position:absolute;right:274px;top:227.70px;font-size:11.5px;line-height:13px;color:#1a1a1a;letter-spacing:0px;white-space:nowrap;">8</div>
<div style="position:absolute;right:257px;top:227.70px;font-size:11.5px;line-height:13px;color:#1a1a1a;letter-spacing:0px;white-space:nowrap;">9</div>
<div style="position:absolute;right:240px;top:227.70px;font-size:11.5px;line-height:13px;color:#1a1a1a;letter-spacing:0px;white-space:nowrap;">10</div>
<div style="position:absolute;right:223px;top:227.70px;font-size:11.5px;line-height:13px;color:#1a1a1a;letter-spacing:0px;white-space:nowrap;">11</div>
<div style="position:absolute;right:325px;top:242.70px;font-size:11.5px;line-height:13px;color:#1a1a1a;letter-spacing:0px;white-space:nowrap;">12</div>
<div style="position:absolute;right:308px;top:242.70px;font-size:11.5px;line-height:13px;color:#1a1a1a;letter-spacing:0px;white-space:nowrap;">13</div>
<div style="position:absolute;right:291px;top:242.70px;font-size:11.5px;line-height:13px;color:#1a1a1a;letter-spacing:0px;white-space:nowrap;">14</div>
<div style="position:absolute;right:274px;top:242.70px;font-size:11.5px;line-height:13px;color:#1a1a1a;letter-spacing:0px;white-space:nowrap;">15</div>
<div style="position:absolute;right:257px;top:242.70px;font-size:11.5px;line-height:13px;color:#1a1a1a;letter-spacing:0px;white-space:nowrap;">16</div>
<div style="position:absolute;right:240px;top:242.70px;font-size:11.5px;line-height:13px;color:#1a1a1a;letter-spacing:0px;white-space:nowrap;">17</div>
<div style="position:absolute;right:223px;top:242.70px;font-size:11.5px;line-height:13px;color:#1a1a1a;letter-spacing:0px;white-space:nowrap;">18</div>
<div style="position:absolute;right:325px;top:257.70px;font-size:11.5px;line-height:13px;color:#1a1a1a;letter-spacing:0px;white-space:nowrap;">19</div>
<div style="position:absolute;right:308px;top:257.70px;font-size:11.5px;line-height:13px;color:#1a1a1a;letter-spacing:0px;white-space:nowrap;">20</div>
<div style="position:absolute;right:291px;top:257.70px;font-size:11.5px;line-height:13px;color:#1a1a1a;letter-spacing:0px;white-space:nowrap;">21</div>
<div style="position:absolute;right:274px;top:257.70px;font-size:11.5px;line-height:13px;color:#fff;letter-spacing:0px;white-space:nowrap;">22</div>
<div style="position:absolute;right:257px;top:257.70px;font-size:11.5px;line-height:13px;color:#fff;letter-spacing:0px;white-space:nowrap;">23</div>
<div style="position:absolute;right:240px;top:257.70px;font-size:11.5px;line-height:13px;color:#1a1a1a;letter-spacing:0px;white-space:nowrap;">24</div>
<div style="position:absolute;right:223px;top:257.70px;font-size:11.5px;line-height:13px;color:#1a1a1a;letter-spacing:0px;white-space:nowrap;">25</div>
<div style="position:absolute;right:325px;top:272.70px;font-size:11.5px;line-height:13px;color:#1a1a1a;letter-spacing:0px;white-space:nowrap;">26</div>
<div style="position:absolute;right:308px;top:272.70px;font-size:11.5px;line-height:13px;color:#1a1a1a;letter-spacing:0px;white-space:nowrap;">27</div>
<div style="position:absolute;right:291px;top:272.70px;font-size:11.5px;line-height:13px;color:#1a1a1a;letter-spacing:0px;white-space:nowrap;">28</div>
<div style="position:absolute;right:274px;top:272.70px;font-size:11.5px;line-height:13px;color:#1a1a1a;letter-spacing:0px;white-space:nowrap;">29</div>
<div style="position:absolute;right:257px;top:272.70px;font-size:11.5px;line-height:13px;color:#1a1a1a;letter-spacing:0px;white-space:nowrap;">30</div>
<div style="position:absolute;right:240px;top:272.70px;font-size:11.5px;line-height:13px;color:#1a1a1a;letter-spacing:0px;white-space:nowrap;">31</div>
<div style="position:absolute;left:735px;top:178px;width:145px;height:16px;background:#aaaaaa"></div>
<div style="position:absolute;left:607px;width:400px;text-align:center;top:179.70px;font-size:11.5px;line-height:13px;color:#222;letter-spacing:0px;white-space:nowrap;-webkit-text-stroke:0.2px #222">November 2020</div>
<svg style="position:absolute;left:870px;top:182px" width="5" height="8" viewBox="0 0 5 8"><path d="M0.5 0.5V7.5L4.5 4Z" fill="#111"/></svg>
<div style="position:absolute;left:559.0px;width:400px;text-align:center;top:195.86px;font-size:11px;line-height:13px;color:#777;letter-spacing:0px;white-space:nowrap;">M</div>
<div style="position:absolute;left:576.35px;width:400px;text-align:center;top:195.86px;font-size:11px;line-height:13px;color:#777;letter-spacing:0px;white-space:nowrap;">D</div>
<div style="position:absolute;left:593.7px;width:400px;text-align:center;top:195.86px;font-size:11px;line-height:13px;color:#777;letter-spacing:0px;white-space:nowrap;">M</div>
<div style="position:absolute;left:611.05px;width:400px;text-align:center;top:195.86px;font-size:11px;line-height:13px;color:#777;letter-spacing:0px;white-space:nowrap;">D</div>
<div style="position:absolute;left:628.4px;width:400px;text-align:center;top:195.86px;font-size:11px;line-height:13px;color:#777;letter-spacing:0px;white-space:nowrap;">F</div>
<div style="position:absolute;left:645.75px;width:400px;text-align:center;top:195.86px;font-size:11px;line-height:13px;color:#777;letter-spacing:0px;white-space:nowrap;">S</div>
<div style="position:absolute;left:663.1px;width:400px;text-align:center;top:195.86px;font-size:11px;line-height:13px;color:#777;letter-spacing:0px;white-space:nowrap;">S</div>
<div style="position:absolute;left:748px;top:209px;width:121px;height:1px;background:#8c8c8c"></div>
<div style="position:absolute;right:76px;top:212.70px;font-size:11.5px;line-height:13px;color:#1a1a1a;letter-spacing:0px;white-space:nowrap;">1</div>
<div style="position:absolute;right:178px;top:227.70px;font-size:11.5px;line-height:13px;color:#1a1a1a;letter-spacing:0px;white-space:nowrap;">2</div>
<div style="position:absolute;right:161px;top:227.70px;font-size:11.5px;line-height:13px;color:#1a1a1a;letter-spacing:0px;white-space:nowrap;">3</div>
<div style="position:absolute;right:144px;top:227.70px;font-size:11.5px;line-height:13px;color:#1a1a1a;letter-spacing:0px;white-space:nowrap;">4</div>
<div style="position:absolute;right:127px;top:227.70px;font-size:11.5px;line-height:13px;color:#1a1a1a;letter-spacing:0px;white-space:nowrap;">5</div>
<div style="position:absolute;right:110px;top:227.70px;font-size:11.5px;line-height:13px;color:#1a1a1a;letter-spacing:0px;white-space:nowrap;">6</div>
<div style="position:absolute;right:93px;top:227.70px;font-size:11.5px;line-height:13px;color:#1a1a1a;letter-spacing:0px;white-space:nowrap;">7</div>
<div style="position:absolute;right:76px;top:227.70px;font-size:11.5px;line-height:13px;color:#1a1a1a;letter-spacing:0px;white-space:nowrap;">8</div>
<div style="position:absolute;right:178px;top:242.70px;font-size:11.5px;line-height:13px;color:#1a1a1a;letter-spacing:0px;white-space:nowrap;">9</div>
<div style="position:absolute;right:161px;top:242.70px;font-size:11.5px;line-height:13px;color:#1a1a1a;letter-spacing:0px;white-space:nowrap;">10</div>
<div style="position:absolute;right:144px;top:242.70px;font-size:11.5px;line-height:13px;color:#1a1a1a;letter-spacing:0px;white-space:nowrap;">11</div>
<div style="position:absolute;right:127px;top:242.70px;font-size:11.5px;line-height:13px;color:#1a1a1a;letter-spacing:0px;white-space:nowrap;">12</div>
<div style="position:absolute;right:110px;top:242.70px;font-size:11.5px;line-height:13px;color:#1a1a1a;letter-spacing:0px;white-space:nowrap;">13</div>
<div style="position:absolute;right:93px;top:242.70px;font-size:11.5px;line-height:13px;color:#1a1a1a;letter-spacing:0px;white-space:nowrap;">14</div>
<div style="position:absolute;right:76px;top:242.70px;font-size:11.5px;line-height:13px;color:#1a1a1a;letter-spacing:0px;white-space:nowrap;">15</div>
<div style="position:absolute;right:178px;top:257.70px;font-size:11.5px;line-height:13px;color:#1a1a1a;letter-spacing:0px;white-space:nowrap;">16</div>
<div style="position:absolute;right:161px;top:257.70px;font-size:11.5px;line-height:13px;color:#1a1a1a;letter-spacing:0px;white-space:nowrap;">17</div>
<div style="position:absolute;right:144px;top:257.70px;font-size:11.5px;line-height:13px;color:#1a1a1a;letter-spacing:0px;white-space:nowrap;">18</div>
<div style="position:absolute;right:127px;top:257.70px;font-size:11.5px;line-height:13px;color:#1a1a1a;letter-spacing:0px;white-space:nowrap;">19</div>
<div style="position:absolute;right:110px;top:257.70px;font-size:11.5px;line-height:13px;color:#1a1a1a;letter-spacing:0px;white-space:nowrap;">20</div>
<div style="position:absolute;right:93px;top:257.70px;font-size:11.5px;line-height:13px;color:#1a1a1a;letter-spacing:0px;white-space:nowrap;">21</div>
<div style="position:absolute;right:76px;top:257.70px;font-size:11.5px;line-height:13px;color:#1a1a1a;letter-spacing:0px;white-space:nowrap;">22</div>
<div style="position:absolute;right:178px;top:272.70px;font-size:11.5px;line-height:13px;color:#1a1a1a;letter-spacing:0px;white-space:nowrap;">23</div>
<div style="position:absolute;right:161px;top:272.70px;font-size:11.5px;line-height:13px;color:#1a1a1a;letter-spacing:0px;white-space:nowrap;">24</div>
<div style="position:absolute;right:144px;top:272.70px;font-size:11.5px;line-height:13px;color:#1a1a1a;letter-spacing:0px;white-space:nowrap;">25</div>
<div style="position:absolute;right:127px;top:272.70px;font-size:11.5px;line-height:13px;color:#1a1a1a;letter-spacing:0px;white-space:nowrap;">26</div>
<div style="position:absolute;right:110px;top:272.70px;font-size:11.5px;line-height:13px;color:#1a1a1a;letter-spacing:0px;white-space:nowrap;">27</div>
<div style="position:absolute;right:93px;top:272.70px;font-size:11.5px;line-height:13px;color:#1a1a1a;letter-spacing:0px;white-space:nowrap;">28</div>
<div style="position:absolute;right:76px;top:272.70px;font-size:11.5px;line-height:13px;color:#1a1a1a;letter-spacing:0px;white-space:nowrap;">29</div>
<div style="position:absolute;right:178px;top:287.70px;font-size:11.5px;line-height:13px;color:#1a1a1a;letter-spacing:0px;white-space:nowrap;">30</div>
<div style="position:absolute;right:161px;top:287.70px;font-size:11.5px;line-height:13px;color:#7c7c7c;letter-spacing:0px;white-space:nowrap;">1</div>
<div style="position:absolute;right:144px;top:287.70px;font-size:11.5px;line-height:13px;color:#7c7c7c;letter-spacing:0px;white-space:nowrap;">2</div>
<div style="position:absolute;right:127px;top:287.70px;font-size:11.5px;line-height:13px;color:#7c7c7c;letter-spacing:0px;white-space:nowrap;">3</div>
<div style="position:absolute;right:110px;top:287.70px;font-size:11.5px;line-height:13px;color:#7c7c7c;letter-spacing:0px;white-space:nowrap;">4</div>
<div style="position:absolute;right:93px;top:287.70px;font-size:11.5px;line-height:13px;color:#7c7c7c;letter-spacing:0px;white-space:nowrap;">5</div>
<div style="position:absolute;right:76px;top:287.70px;font-size:11.5px;line-height:13px;color:#7c7c7c;letter-spacing:0px;white-space:nowrap;">6</div>
<div style="position:absolute;left:830px;top:319px;width:21px;height:21px;border:2px solid #9c5b0c;background:#ee960f;"></div>
<div style="position:absolute;left:830.5px;top:322.5px;width:25px;height:21px;color:#fff;font-size:18px;line-height:21px;text-align:center;-webkit-text-stroke:0.6px #fff;transform:scaleX(0.84);">4</div>
<svg style="position:absolute;left:547px;top:482px" width="24" height="20" viewBox="0 0 24 20"><path d="M3.7 8.5L10.4 14.5L20.2 3.6" fill="none" stroke="#1ba1e2" stroke-width="4.8"/></svg>
<div style="position:absolute;left:585px;top:485.87px;font-size:12.5px;line-height:14px;color:#f2f2f2;letter-spacing:0px;white-space:nowrap;transform:scaleX(0.85);transform-origin:left;">&Uuml;bernehmen</div>
<svg style="position:absolute;left:679px;top:480px" width="24" height="24" viewBox="0 0 24 24"><circle cx="12" cy="12" r="11.2" fill="#f0960f"/><rect x="5" y="10" width="14" height="4" fill="#696969"/></svg>
<div style="position:absolute;left:727px;top:485.87px;font-size:12.5px;line-height:14px;color:#f2f2f2;letter-spacing:0px;white-space:nowrap;transform:scaleX(0.85);transform-origin:left;">L&ouml;schen</div>
<svg style="position:absolute;left:811px;top:480px" width="24" height="24" viewBox="0 0 24 24"><circle cx="12" cy="12" r="11.2" fill="#1ba1e2"/><path d="M7.2 7.2L16.8 16.8M16.8 7.2L7.2 16.8" stroke="#696969" stroke-width="3.8"/></svg>
<div style="position:absolute;left:858px;top:485.87px;font-size:12.5px;line-height:14px;color:#f2f2f2;letter-spacing:0px;white-space:nowrap;transform:scaleX(0.85);transform-origin:left;">Beenden</div>
</body></html>
